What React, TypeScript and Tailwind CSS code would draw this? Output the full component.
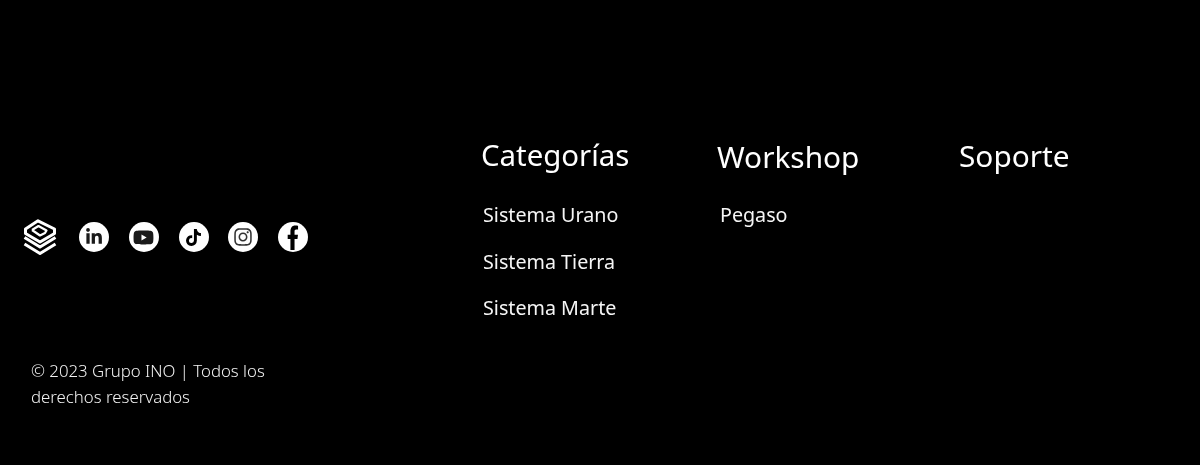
import { FaInstagram, FaLinkedinIn, FaTiktok, FaYoutube } from "react-icons/fa";

const FacebookF = () => (
  <svg width="12" height="25" viewBox="0 0 14 24" preserveAspectRatio="none" fill="black">
    <path d="M4 24 V13.5 H0.8 V9.3 H4 V6.2 C4 2.4 6.2 0.4 9.4 0.4 C11 0.4 12.4 0.6 12.9 0.7 V4.4 H10.8 C9.2 4.4 8.8 5.2 8.8 6.4 V9.3 H12.8 L12.2 13.5 H8.8 V24 Z" />
  </svg>
);

const socials = [
  { name: "linkedin", icon: <FaLinkedinIn className="w-[18px] h-[18px] text-[#1a1a1a]" /> },
  { name: "youtube", icon: <FaYoutube className="w-[21px] h-[21px] text-[#1a1a1a]" /> },
  { name: "tiktok", icon: <FaTiktok className="w-[17px] h-[17px]" /> },
  { name: "instagram", icon: <FaInstagram className="w-[20px] h-[20px] text-[#333333]" /> },
  { name: "facebook", icon: <FacebookF /> },
];

const Logo = () => (
  <svg width="34" height="37" viewBox="0 0 34 37" fill="none" stroke="white" strokeWidth="3" strokeLinejoin="round">
    <path d="M15 1.8 L31.5 10 L31.5 14.5 L17 23 L2.5 14.5 L2.5 10 Z" />
    <path d="M9 11 L15.5 7 L23.5 11.5 L22 14 L17 16.5 L9 11" strokeWidth="2.2" />
    <path d="M1.5 18.5 L17 28 L32.5 18.5" />
    <path d="M1.5 25 L17 34.5 L32.5 25" />
  </svg>
);

export default function App() {
  return (
    <footer className="flex w-full h-[465px] bg-black text-white font-['Noto_Sans',sans-serif]">
      <div className="w-[481px] pl-[23px] pt-[218px]">
        <div className="flex items-center h-[38px]">
          <Logo />
          <div className="flex ml-[22px] gap-[19.75px]">
            {socials.map((s) => (
              <a
                key={s.name}
                className="w-[30px] h-[30px] rounded-full bg-white text-black flex items-center justify-center"
              >
                {s.icon}
              </a>
            ))}
          </div>
        </div>
        <p className="mt-[102px] ml-[8px] w-[250px] text-[16.8px] leading-[26px] font-light text-[#f2f2f2] will-change-transform">
          © 2023 Grupo INO | Todos los derechos reservados
        </p>
      </div>

      <div className="w-[236px] pt-[134px] will-change-transform">
        <h3 className="text-[29.4px] leading-[42px]">Categorías</h3>
        <ul className="mt-[26px] ml-[2px] text-[19.7px] leading-[26px] space-y-[20.5px] text-[#f5f5f5]">
          <li>Sistema Urano</li>
          <li>Sistema Tierra</li>
          <li>Sistema Marte</li>
        </ul>
      </div>

      <div className="w-[242px] pt-[136px] will-change-transform">
        <h3 className="text-[29.8px] leading-[42px]">Workshop</h3>
        <ul className="mt-[24px] ml-[3px] text-[19.7px] leading-[26px] text-[#f5f5f5]">
          <li>Pegaso</li>
        </ul>
      </div>

      <div className="pt-[135px] will-change-transform">
        <h3 className="text-[29.8px] leading-[42px]">Soporte</h3>
      </div>
    </footer>
  );
}
